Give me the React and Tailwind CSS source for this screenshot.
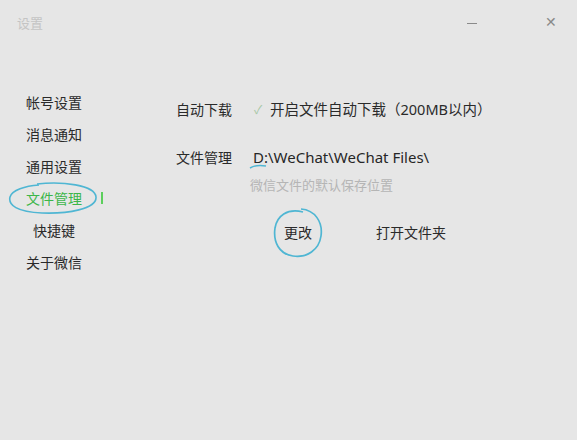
import React from "react";

const font = { fontFamily: '"Noto Sans", "Noto Sans CJK SC", sans-serif' };

const NavItem = ({ label, active, children }) => (
  <div className="relative flex h-8 items-center">
    <span className={`w-[58px] text-center text-[14px] ${active ? "text-[#3cb64a]" : "text-[#2a2a2a]"}`}>{label}</span>
    {active && <span className="ml-[18px] h-[12px] w-[2px] bg-[#5ccf5c]" />}
    {children}
  </div>
);

export default function App() {
  return (
    <div className="h-[440px] w-[577px] overflow-hidden bg-[#e6e6e6] text-[#2a2a2a]" style={font}>
      {/* title bar */}
      <div className="flex h-[50px] items-start justify-between pl-[17px] pr-[20px] pt-[14px]">
        <span className="text-[13px] text-[#c4c4c4]">设置</span>
        <div className="flex items-center gap-[68px] pt-[1px] text-[#8a8a8a]">
          <span className="mt-[2px] h-[1px] w-[10px] bg-[#8a8a8a]" />
          <span className="text-[14px] leading-none">✕</span>
        </div>
      </div>

      <div className="flex pt-[36px]">
        {/* sidebar */}
        <div className="w-[176px] pl-[25px]">
          <NavItem label="帐号设置" />
          <NavItem label="消息通知" />
          <NavItem label="通用设置" />
          <NavItem label="文件管理" active>
            <svg className="absolute left-[-18px] top-[-1px]" width="92" height="34" viewBox="0 0 92 34">
              <path d="M30 3 C55 0 88 4 89 16 C90 28 60 33 35 32 C10 31 1 24 3 16 C5 9 18 5 32 4" fill="none" stroke="#4fb6d3" strokeWidth="1.6" />
            </svg>
          </NavItem>
          <NavItem label="快捷键" />
          <NavItem label="关于微信" />
        </div>

        {/* content */}
        <div className="flex-1 pt-[13px] text-[14px]">
          <div className="flex items-center">
            <span className="w-[78px]">自动下载</span>
            <span className="w-[16px] text-[12px] text-[#a8c8a8]">✓</span>
            <span className="text-[14.5px]">开启文件自动下载（200MB以内）</span>
          </div>
          <div className="mt-[25px] flex items-center">
            <span className="w-[77px]">文件管理</span>
            <span className="relative text-[15px] text-[#262626]">
              D:\WeChat\WeChat Files\
              <svg className="absolute left-[-4px] top-[18px]" width="20" height="6" viewBox="0 0 20 6">
                <path d="M1 4 C6 1 12 1 17 2" fill="none" stroke="#4fb6d3" strokeWidth="1.5" />
              </svg>
            </span>
          </div>
          <div className="mt-[8px] pl-[74px] text-[13px] text-[#b5b5b5]">微信文件的默认保存位置</div>
          <div className="mt-[26px] flex items-center pl-[108px]">
            <span className="relative">
              更改
              <svg className="absolute left-[-13px] top-[-16px]" width="56" height="54" viewBox="0 0 56 54">
                <path d="M30 3 C44 4 52 16 50 30 C48 44 36 52 22 50 C8 48 2 36 4 22 C6 10 16 2 32 6" fill="none" stroke="#4fb6d3" strokeWidth="1.7" />
              </svg>
            </span>
            <span className="ml-[64px]">打开文件夹</span>
          </div>
        </div>
      </div>
    </div>
  );
}
